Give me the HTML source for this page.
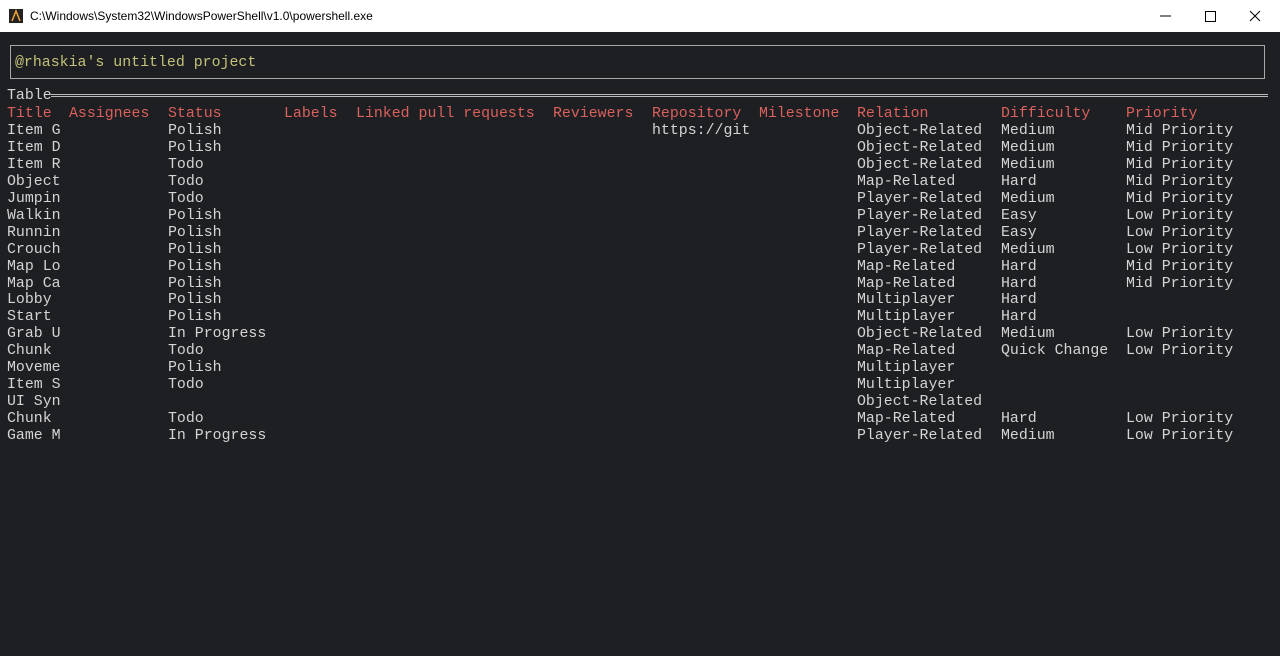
<!DOCTYPE html><html><head><style>
body{margin:0;width:1280px;height:656px;background:#1e1f22;overflow:hidden;font-family:"Liberation Mono",monospace;}
#tb{position:absolute;left:0;top:0;width:1280px;height:32px;background:#fff;font-family:"Liberation Sans",sans-serif;font-size:12px;color:#000}
#tb .t{position:absolute;left:30px;top:9px}
.c{position:absolute;white-space:pre;font-size:14.9px;line-height:16.95px;color:#d4d4d4}
.h{color:#d9605c}
</style></head><body>
<div id="tb"><svg style="position:absolute;left:9px;top:9px" width="14" height="14"><rect width="14" height="14" fill="#222"/><path d="M3 12 L7 2 L11 12" stroke="#e8a030" stroke-width="1.6" fill="none"/></svg><span class="t">C:\Windows\System32\WindowsPowerShell\v1.0\powershell.exe</span>
<svg style="position:absolute;left:1150px;top:8px" width="120" height="16"><line x1="10" y1="8" x2="21" y2="8" stroke="#000"/><rect x="55.5" y="3.5" width="10" height="10" fill="none" stroke="#000"/><path d="M100 3 L110 13 M110 3 L100 13" stroke="#000"/></svg></div>
<div style="position:absolute;left:10px;top:45px;width:1253px;height:32px;border:1px solid #a8a8a8"></div>
<div class="c" style="left:15px;top:55px;color:#c3c27a">@rhaskia's untitled project</div>
<div class="c" style="left:7px;top:88px">Table</div>
<div style="position:absolute;left:51px;top:94px;width:1217px;height:1px;border-top:1px solid #bbb;border-bottom:1px solid #bbb"></div>
<div class="c" style="left:7px;top:106px"><span class="h">Title</span>
Item G
Item D
Item R
Object
Jumpin
Walkin
Runnin
Crouch
Map Lo
Map Ca
Lobby
Start
Grab U
Chunk
Moveme
Item S
UI Syn
Chunk
Game M</div>
<div class="c h" style="left:69px;top:106px">Assignees</div>
<div class="c" style="left:168px;top:106px"><span class="h">Status</span>
Polish
Polish
Todo
Todo
Todo
Polish
Polish
Polish
Polish
Polish
Polish
Polish
In Progress
Todo
Polish
Todo

Todo
In Progress</div>
<div class="c h" style="left:284px;top:106px">Labels</div>
<div class="c h" style="left:356px;top:106px">Linked pull requests</div>
<div class="c h" style="left:553px;top:106px">Reviewers</div>
<div class="c" style="left:652px;top:106px"><span class="h">Repository</span>
https://git</div>
<div class="c h" style="left:759px;top:106px">Milestone</div>
<div class="c" style="left:857px;top:106px"><span class="h">Relation</span>
Object-Related
Object-Related
Object-Related
Map-Related
Player-Related
Player-Related
Player-Related
Player-Related
Map-Related
Map-Related
Multiplayer
Multiplayer
Object-Related
Map-Related
Multiplayer
Multiplayer
Object-Related
Map-Related
Player-Related</div>
<div class="c" style="left:1001px;top:106px"><span class="h">Difficulty</span>
Medium
Medium
Medium
Hard
Medium
Easy
Easy
Medium
Hard
Hard
Hard
Hard
Medium
Quick Change



Hard
Medium</div>
<div class="c" style="left:1126px;top:106px"><span class="h">Priority</span>
Mid Priority
Mid Priority
Mid Priority
Mid Priority
Mid Priority
Low Priority
Low Priority
Low Priority
Mid Priority
Mid Priority


Low Priority
Low Priority



Low Priority
Low Priority</div>
</body></html>
